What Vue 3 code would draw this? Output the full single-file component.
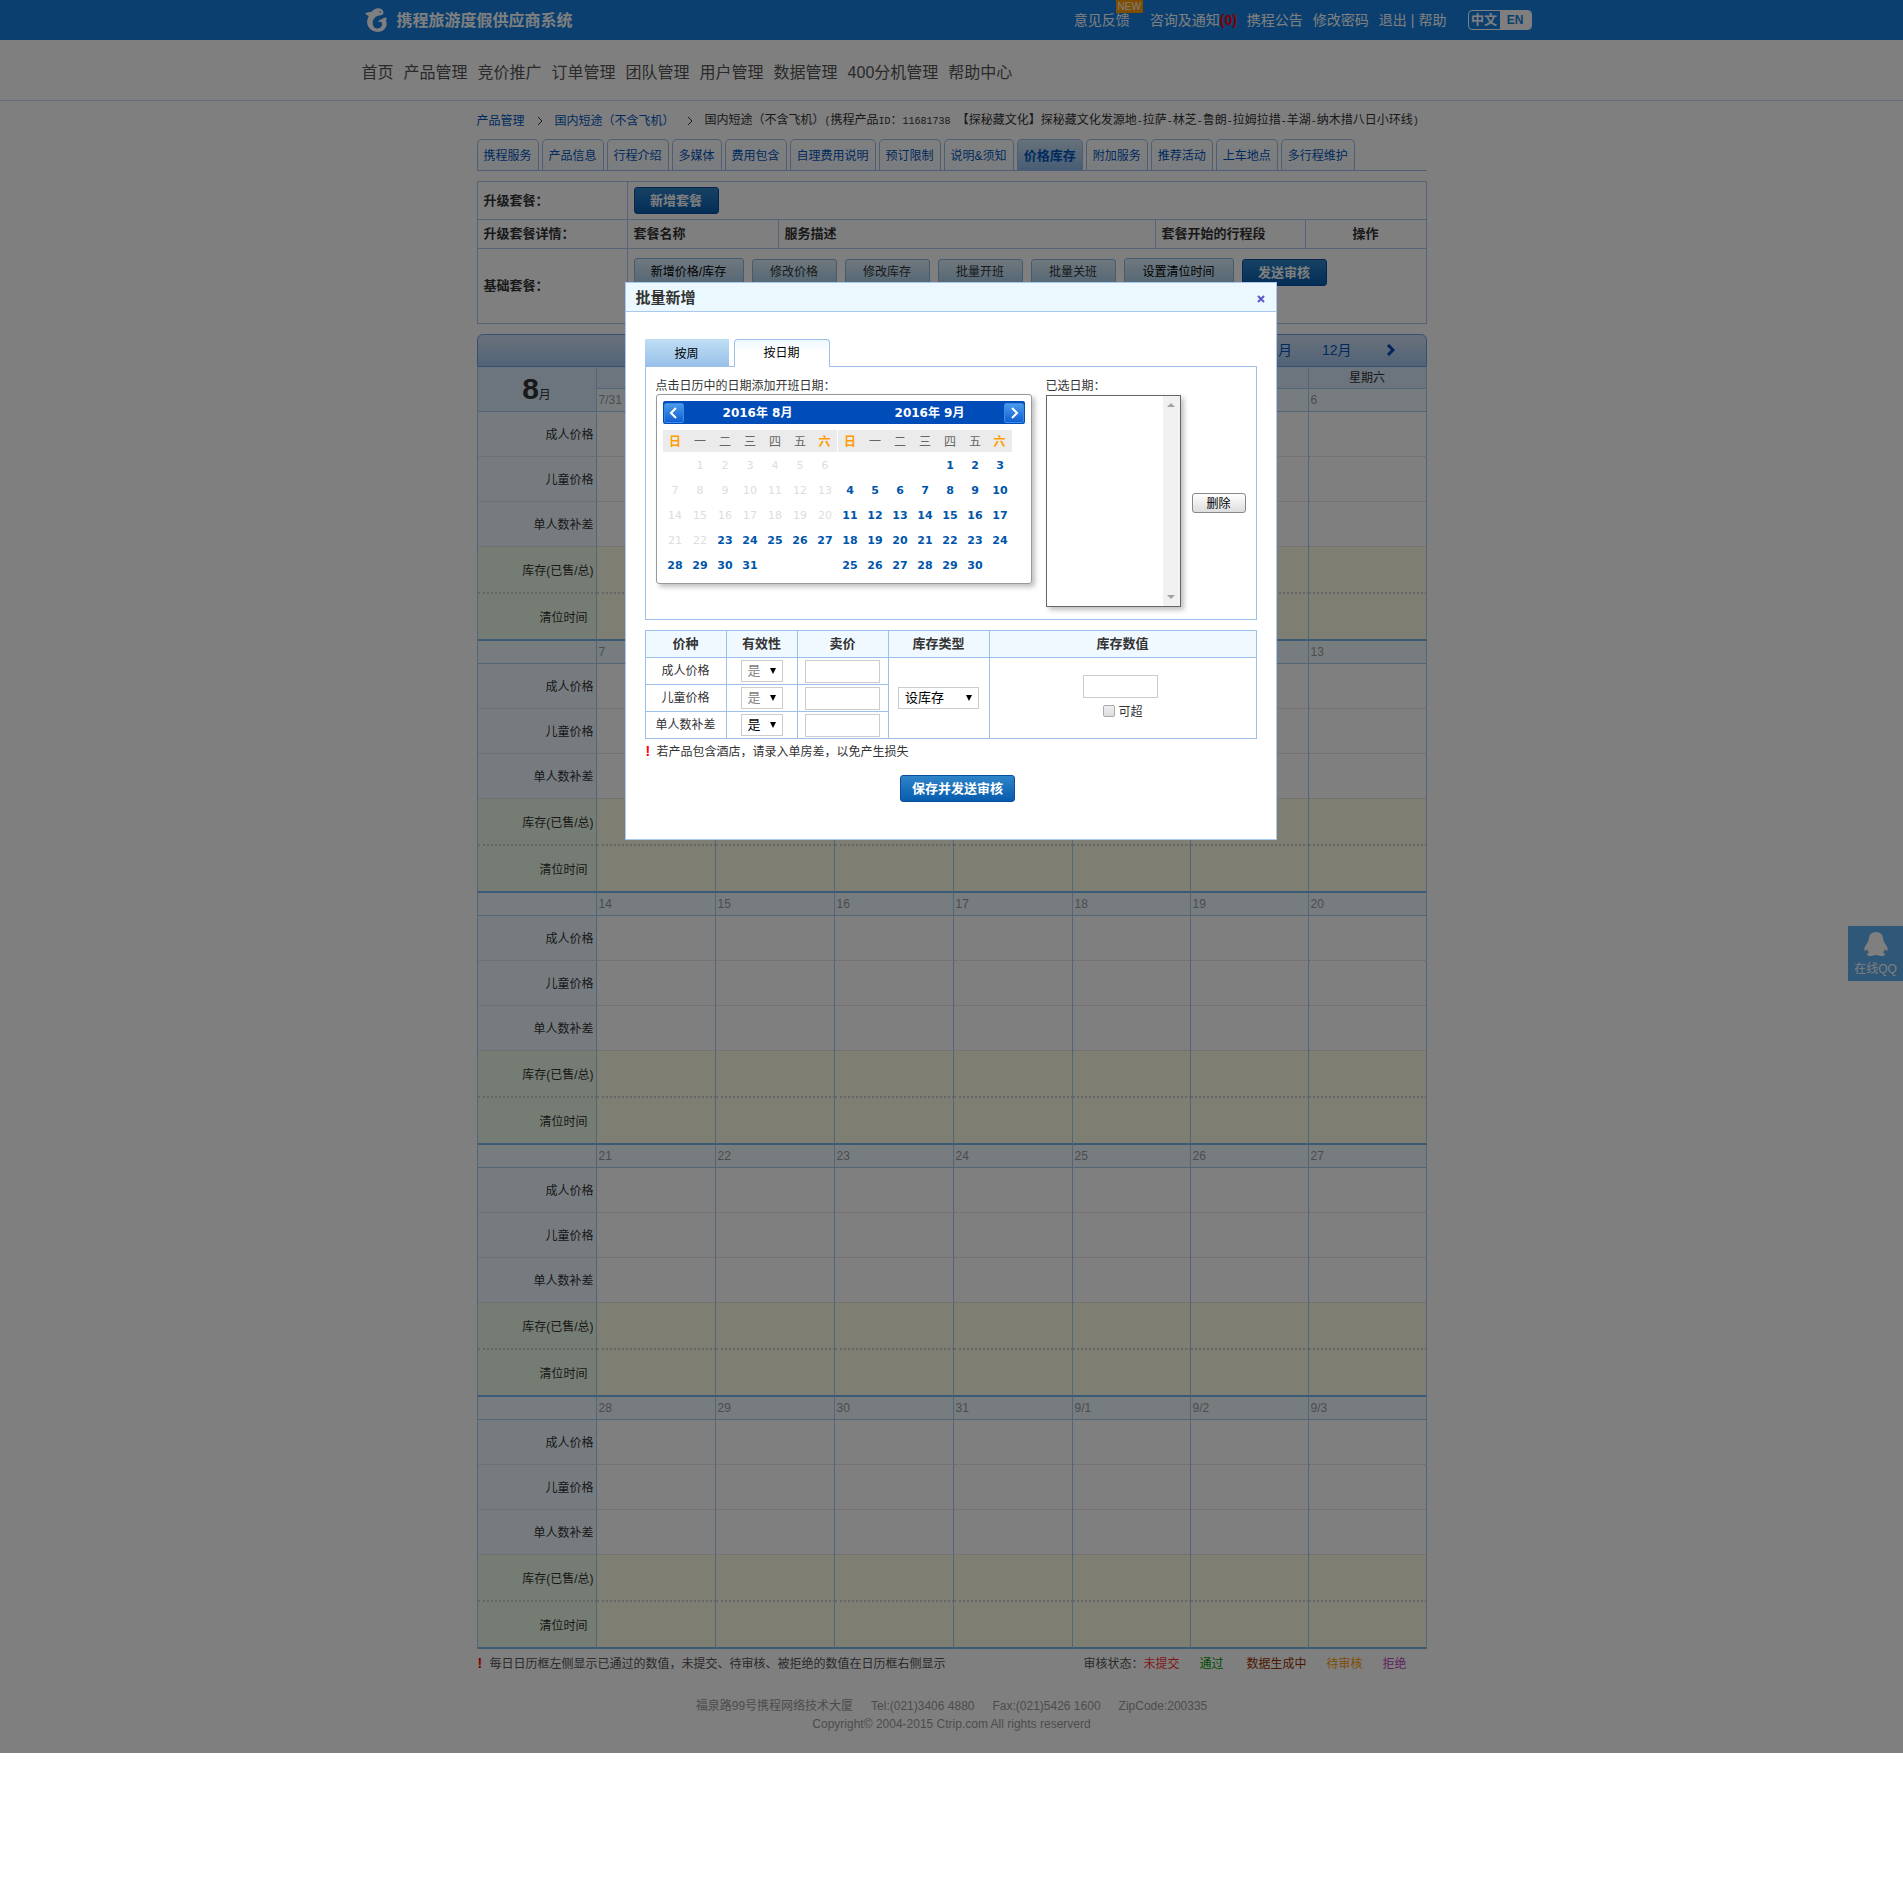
<script setup>
import { ref } from 'vue'

const nav = ['首页', '产品管理', '竞价推广', '订单管理', '团队管理', '用户管理', '数据管理', '400分机管理', '帮助中心']
const places = ['拉萨', '林芝', '鲁朗', '拉姆拉措', '羊湖', '纳木措八日小环线']
const tabs = ['携程服务', '产品信息', '行程介绍', '多媒体', '费用包含', '自理费用说明', '预订限制', '说明&须知', '价格库存', '附加服务', '推荐活动', '上车地点', '多行程维护']
const actions = [
  { label: '新增价格/库存', kind: 'wide' },
  { label: '修改价格', kind: 'soft' },
  { label: '修改库存', kind: 'soft' },
  { label: '批量开班', kind: 'soft' },
  { label: '批量关班', kind: 'soft' },
  { label: '设置清位时间', kind: 'wide' },
  { label: '发送审核', kind: 'primary' }
]
const months = ['11月', '12月']
const weekdays = ['日', '一', '二', '三', '四', '五', '六']
const weeks = [
  ['7/31', '1', '2', '3', '4', '5', '6'],
  ['7', '8', '9', '10', '11', '12', '13'],
  ['14', '15', '16', '17', '18', '19', '20'],
  ['21', '22', '23', '24', '25', '26', '27'],
  ['28', '29', '30', '31', '9/1', '9/2', '9/3']
]
const rows = [
  { label: '成人价格', cls: 'price' },
  { label: '儿童价格', cls: 'price' },
  { label: '单人数补差', cls: 'price' },
  { label: '库存(已售/总)', cls: 'stock' },
  { label: '清位时间', cls: 'stock clear' }
]

function buildMonth(title, offset, count, firstOpen) {
  const cells = Array(offset).fill(null)
  for (let d = 1; d <= count; d++) cells.push({ d, open: d >= firstOpen })
  while (cells.length < 35) cells.push(null)
  const lines = []
  for (let i = 0; i < 35; i += 7) lines.push(cells.slice(i, i + 7))
  return { title, lines }
}
const pickers = [buildMonth('2016年 8月', 1, 31, 23), buildMonth('2016年 9月', 4, 30, 1)]

const priceRows = [
  { label: '成人价格', locked: true },
  { label: '儿童价格', locked: true },
  { label: '单人数补差', locked: false }
]
const prices = ref(['', '', ''])
const stock = ref('')
const over = ref(false)
</script>

<template>
  <div class="page">
    <header class="top">
      <div class="wrap top-in">
        <a href="#" class="brand">
          <svg viewBox="0 0 24 24" width="24" height="24" aria-hidden="true">
            <path fill="#fff" d="M0 5.500C2 4.200 4.500 4.600 7 3.600C8.500 1.500 11 0 14 .3C16.500.6 18.500 2.400 18.500 4.600C18.500 6.300 17.300 7.200 15.500 7.300C12 7.600 9 9.500 8 12.600C7.200 15.600 8 18.800 10.500 20.200C13 21.200 16.300 19.800 17 17.200C17.300 15.800 17 14.600 16 13.700L13 14C13.700 12.300 15 11.300 17 11.200C18.300 10 20.300 9.600 22 10C21.300 10.900 21 11.800 21.100 13C22.300 16.200 21.400 19.800 18.700 22C15.400 24.700 9.600 24.300 5.500 21.200C1.800 18 1 12.800 3.800 8.600C3 7.300 1.200 6.700 0 5.500Z" />
            <circle cx="15" cy="4" r=".8" fill="#147fe1" />
          </svg>
          <span>携程旅游度假供应商系统</span>
        </a>
        <div class="links">
          <a href="#" class="feedback">意见反馈<span class="new">NEW</span></a>
          <a href="#" class="notice">咨询及通知<b>(0)</b></a>
          <a href="#">携程公告</a>
          <a href="#">修改密码</a>
          <span class="pair"><a href="#">退出</a><i>|</i><a href="#">帮助</a></span>
          <span class="lang"><a href="#" class="zh">中文</a><a href="#" class="en">EN</a></span>
        </div>
      </div>
    </header>
    <nav class="nav">
      <div class="wrap nav-in"><a v-for="n in nav" :key="n" href="#">{{ n }}</a></div>
    </nav>

    <main class="main">
      <div class="crumbs">
        <a href="#">产品管理</a>
        <svg viewBox="0 0 6 10" width="6" height="10"><path d="M1 1l4 4-4 4" fill="none" stroke="#333" /></svg>
        <a href="#">国内短途（不含飞机）</a>
        <svg viewBox="0 0 6 10" width="6" height="10"><path d="M1 1l4 4-4 4" fill="none" stroke="#333" /></svg>
        <span class="current">国内短途（不含飞机）<span class="mono">(</span>携程产品<span class="mono">ID</span>：<span class="mono">11681738&nbsp;</span>【探秘藏文化】探秘藏文化发源地<template v-for="p in places" :key="p"><span class="mono">-</span>{{ p }}</template><span class="mono">)</span></span>
      </div>

      <div class="tabs">
        <a v-for="t in tabs" :key="t" href="#" :class="{ on: t === '价格库存' }">{{ t }}</a>
      </div>

      <table class="info">
        <colgroup><col class="c1"><col class="c2"><col><col class="c1"><col class="c5"></colgroup>
        <tbody>
          <tr class="r1"><th>升级套餐：</th><td colspan="4"><button type="button" class="btn primary">新增套餐</button></td></tr>
          <tr class="r2"><th>升级套餐详情：</th><th>套餐名称</th><th>服务描述</th><th>套餐开始的行程段</th><th class="mid">操作</th></tr>
          <tr class="r3">
            <th>基础套餐：</th>
            <td colspan="4">
              <div class="actions"><button v-for="a in actions" :key="a.label" type="button" class="btn" :class="a.kind">{{ a.label }}</button></div>
            </td>
          </tr>
        </tbody>
      </table>

      <div class="months">
        <a v-for="m in months" :key="m" href="#">{{ m }}</a>
        <button type="button" aria-label="下一月"><svg viewBox="0 0 10 12" width="10" height="12"><path d="M2 1l5 5-5 5" fill="none" stroke="#0648b8" stroke-width="3" /></svg></button>
      </div>
      <table class="sched">
        <colgroup><col v-for="n in 5" :key="n" class="lab"><col><col><col></colgroup>
        <tbody>
          <tr class="days">
            <th rowspan="2" class="month"><b>8</b>月</th>
            <th v-for="w in weekdays" :key="w">星期{{ w }}</th>
          </tr>
          <template v-for="(week, i) in weeks" :key="i">
            <tr class="dates">
              <th v-if="i > 0"></th>
              <td v-for="d in week" :key="d">{{ d }}</td>
            </tr>
            <tr v-for="r in rows" :key="r.label" :class="r.cls"><th>{{ r.label }}</th><td v-for="d in week" :key="d"></td></tr>
          </template>
        </tbody>
      </table>

      <div class="notes">
        <p><b class="bang">!</b>每日日历框左侧显示已通过的数值，未提交、待审核、被拒绝的数值在日历框右侧显示</p>
        <div class="legend">
          <span>审核状态：<span class="s1">未提交</span></span><span class="s2">通过</span><span class="s3">数据生成中</span><span class="s4">待审核</span><span class="s5">拒绝</span>
        </div>
      </div>
    </main>

    <footer class="foot">
      <div class="foot-line"><span>福泉路99号携程网络技术大厦</span><span>Tel:(021)3406 4880</span><span>Fax:(021)5426 1600</span><span>ZipCode:200335</span></div>
      <div>Copyright© 2004-2015 Ctrip.com All rights reserverd</div>
    </footer>

    <a href="#" class="qq">
      <svg viewBox="0 0 24 24" width="24" height="24" aria-hidden="true"><path fill="#fff" d="M12 0C7.300 0 4.800 3.200 4.800 7.200C4.800 8.200 4.300 8.900 3.800 10C2.200 12.600 0 15.600.2 18C.4 19.400 1.800 18.600 3 16.900C3.300 18.400 4 19.600 5 20.600C2.700 21.400 2.300 23.200 4.500 23.700C7 24.200 10.500 23.700 12 22.800C13.500 23.700 17 24.200 19.500 23.700C21.700 23.200 21.300 21.400 19 20.600C20 19.600 20.700 18.400 21 16.900C22.200 18.600 23.600 19.400 23.800 18C24 15.600 21.800 12.600 20.200 10C19.700 8.900 19.200 8.200 19.200 7.200C19.200 3.200 16.700 0 12 0Z" /></svg>
      <span>在线QQ</span>
    </a>

    <div class="mask"></div>

    <section class="modal" role="dialog" aria-label="批量新增">
      <div class="modal-head">
        <h2>批量新增</h2>
        <button type="button" aria-label="关闭"><svg viewBox="0 0 8 8" width="8" height="8"><path d="M1 1l6 6M7 1l-6 6" stroke="#5a5ac8" stroke-width="2" /></svg></button>
      </div>
      <div class="modal-body">
        <div class="mtabs"><button type="button" class="week">按周</button><button type="button" class="date">按日期</button></div>
        <div class="panel">
          <div class="pick">
            <p>点击日历中的日期添加开班日期：</p>
            <div class="cal">
              <div class="cal-bar">
                <button type="button" aria-label="上一月"><svg viewBox="0 0 10 12" width="10" height="12"><path d="M7 1L2 6l5 5" fill="none" stroke="#fff" stroke-width="2" /></svg></button>
                <div class="titles"><span v-for="m in pickers" :key="m.title">{{ m.title }}</span></div>
                <button type="button" aria-label="下一月"><svg viewBox="0 0 10 12" width="10" height="12"><path d="M3 1l5 5-5 5" fill="none" stroke="#fff" stroke-width="2" /></svg></button>
              </div>
              <div class="cal-months">
                <table v-for="m in pickers" :key="m.title">
                  <thead><tr><th v-for="w in weekdays" :key="w" :class="{ end: w === '日' || w === '六' }">{{ w }}</th></tr></thead>
                  <tbody>
                    <tr v-for="(line, i) in m.lines" :key="i">
                      <td v-for="(c, j) in line" :key="j" :class="{ open: c && c.open }">{{ c ? c.d : '' }}</td>
                    </tr>
                  </tbody>
                </table>
              </div>
            </div>
          </div>
          <div class="chosen">
            <label for="chosen">已选日期：</label>
            <div class="list">
              <select id="chosen" multiple></select>
              <div class="bar"><i class="up"></i><i class="down"></i></div>
            </div>
          </div>
          <button type="button" class="del">删除</button>
        </div>

        <table class="form">
          <colgroup><col class="f1"><col class="f2"><col class="f3"><col class="f4"><col></colgroup>
          <thead><tr><th>价种</th><th>有效性</th><th>卖价</th><th>库存类型</th><th>库存数值</th></tr></thead>
          <tbody>
            <tr v-for="(r, i) in priceRows" :key="r.label">
              <td><label :for="'price' + i">{{ r.label }}</label></td>
              <td><span class="sel small"><select :disabled="r.locked" :aria-label="r.label + '有效性'"><option>是</option></select></span></td>
              <td><input :id="'price' + i" v-model="prices[i]" type="text" class="box"></td>
              <td v-if="i === 0" rowspan="3"><span class="sel"><select aria-label="库存类型"><option>设库存</option></select></span></td>
              <td v-if="i === 0" rowspan="3">
                <div class="stock-cell">
                  <input v-model="stock" type="text" class="box" aria-label="库存数值">
                  <label class="over"><input v-model="over" type="checkbox">可超</label>
                </div>
              </td>
            </tr>
          </tbody>
        </table>
        <p class="tip"><b class="bang">!</b>若产品包含酒店，请录入单房差，以免产生损失</p>
        <div class="submit"><button type="button" class="btn primary save">保存并发送审核</button></div>
      </div>
    </section>
  </div>
</template>

<style>
body { margin: 0; background: #fff; }
</style>

<style scoped>
* { box-sizing: border-box; }
.page { position: relative; font: 12px/18px "Liberation Sans", "Noto Sans CJK SC", sans-serif; color: #333; }
a { color: #0055bb; text-decoration: none; }
p, h2 { margin: 0; }
button, input, select { font-family: inherit; font-size: 12px; margin: 0; padding: 0; }
svg { display: block; }
i { font-style: normal; }
table { border-collapse: separate; border-spacing: 0; table-layout: fixed; width: 100%; }
th, td { padding: 0; }
.wrap { width: 1180px; max-width: 100%; margin: 0 auto; }

.top { height: 40px; background: #147fe1; }
.top-in { height: 40px; display: flex; justify-content: space-between; align-items: center; padding: 0 10px 0 3px; }
.brand { display: flex; align-items: center; gap: 8px; color: #fff; font-size: 16px; font-weight: bold; white-space: nowrap; }
.brand span { padding-top: 2px; }
.links { display: flex; align-items: center; gap: 10px; font-size: 14px; line-height: 20px; white-space: nowrap; }
.links a { color: #fff; }
.links i { color: #fff; margin: 0 4px; }
.feedback { position: relative; margin-right: 10px; }
.new { position: absolute; right: -13px; top: -10px; width: 27px; height: 13px; background: #ff9c00; font-size: 10px; line-height: 13px; text-align: center; }
.notice b { color: #f00; }
.lang { display: flex; width: 64px; height: 20px; margin-left: 11px; border: 1px solid #fff; border-radius: 4px; font-size: 13px; font-weight: bold; line-height: 18px; text-align: center; overflow: hidden; }
.lang a { flex: 1; }
.lang .en { background: #fff; color: #147fe1; font-size: 12px; }

.nav { border-bottom: 1px solid #cfe0f0; }
.nav-in { display: flex; gap: 10px; height: 60px; padding-top: 5px; align-items: center; font-size: 16px; line-height: 24px; }
.nav-in a { color: #555; white-space: nowrap; }

.main { width: 950px; max-width: 100%; margin: 0 auto; }
.crumbs { height: 38px; padding-top: 2px; display: flex; align-items: center; white-space: nowrap; }
.crumbs svg { margin: 0 12px; }
.current { color: #333; }
.mono { font: 10px/18px "Liberation Mono", monospace; }
.tabs { display: flex; gap: 3px; height: 32px; border-bottom: 1px solid #9dbfeb; margin-bottom: 10px; }
.tabs a { height: 31px; padding: 0 6px; border: 1px solid #9dbfeb; border-bottom: 0; border-radius: 5px 5px 0 0; line-height: 32px; white-space: nowrap; background: linear-gradient(#fff, #f3f9ff); }
.tabs a.on { font-size: 13px; font-weight: bold; line-height: 31px; background: linear-gradient(#cfe4f4, #8fbaea); }

.info { border-left: 1px solid #aac9ee; border-top: 1px solid #aac9ee; margin-bottom: 10px; font-size: 13px; }
.info th, .info td { border-right: 1px solid #aac9ee; border-bottom: 1px solid #aac9ee; padding: 0 6px; text-align: left; }
.info .mid { text-align: center; }
.c1 { width: 150px; }
.c2 { width: 151px; }
.c5 { width: 121px; }
.r1 { height: 38px; }
.r2 { height: 29px; }
.r3 { height: 75px; }
.r3 td { vertical-align: top; }
.actions { display: flex; gap: 8px; align-items: center; padding-top: 9px; }
.btn { display: block; width: 85px; height: 27px; border-radius: 3px; line-height: 25px; white-space: nowrap; text-align: center; }
.primary { border: 1px solid #0a4f9c; background: linear-gradient(#2e84c8, #085cae); color: #fff; font-size: 13px; font-weight: bold; }
.soft, .wide { border: 1px solid #8bb8dc; background: linear-gradient(#dff0fc, #a6cdea); color: #333; }
.wide { width: 110px; height: 29px; line-height: 27px; color: #000; }

.months { display: flex; justify-content: flex-end; align-items: center; gap: 30px; height: 33px; padding: 0 30px 2px 0; border: 1px solid #6a9fdc; border-radius: 6px 6px 0 0; background: linear-gradient(#d4e4f6, #a4c6ee); font-size: 14px; }
.months button { width: 10px; height: 12px; border: 0; background: none; margin-left: 4px; }
.sched { border-left: 1px solid #aacbf0; }
.lab { width: 119px; }
.sched th, .sched td { border-right: 1px solid #aacbf0; border-bottom: 1px solid #aacbf0; font-weight: normal; }
.sched .days { height: 22px; }
.sched .days th { background: #d8e8fa; }
.sched .month { font-size: 12px; }
.month b { font-size: 30px; line-height: 36px; }
.dates { height: 23px; background: #eefaff; }
.dates td { padding-left: 2px; color: #999; line-height: 20px; }
.price th, .stock th { text-align: right; padding: 2px 2px 0 0; }
.sched .price th, .sched .price td { border-bottom: 1px dotted #ccc; }
.price { height: 45px; }
.price th { background: #ecf7ff; }
.stock { height: 47px; background: #fffde6; }
.stock th { background: #ebf8e6; }
.sched .stock th, .sched .stock td { border-bottom: 2px dotted #ccc; }
.sched .clear th, .sched .clear td { border-bottom: 2px solid #76b5ea; }
.sched .clear th { padding-right: 8px; }

.notes { display: flex; justify-content: space-between; height: 28px; line-height: 28px; white-space: nowrap; }
.bang { display: inline-block; width: 13px; padding-left: 1px; color: #f00; font-size: 14px; }
.notes p { color: #555; }
.legend { display: flex; gap: 20px; padding-right: 20px; color: #555; line-height: 30px; }
.s1 { color: #f33; }
.s2 { color: #090; }
.s3 { color: #930; margin-left: 3px; }
.s4 { color: #f90; }
.s5 { color: #b4b; }
.foot { padding: 20px 0 20px; color: #999; text-align: center; }
.foot-line { display: flex; justify-content: center; gap: 18px; }
.qq { position: absolute; right: 0; top: 926px; width: 55px; height: 55px; padding-top: 6px; background: #5eaef0; color: #fff; display: flex; flex-direction: column; align-items: center; gap: 4px; }

.mask { position: absolute; inset: 0; background: rgba(0, 0, 0, .5); }
.modal { position: absolute; top: 282px; left: 50%; width: 652px; margin-left: -327px; border: 1px solid #a8c8f0; background: #fff; }
.modal-head { display: flex; justify-content: space-between; align-items: center; height: 29px; padding: 0 11px 0 10px; border-bottom: 1px solid #a8c8f0; background: #ebf8ff; }
.modal-head h2 { padding-top: 2px; font-size: 15px; line-height: 26px; }
.modal-head button { width: 8px; height: 8px; border: 0; background: none; margin-top: 4px; }
.modal-body { padding: 27px 19px 37px; }
.mtabs { display: flex; gap: 5px; height: 28px; position: relative; margin-bottom: -1px; }
.mtabs button { color: #000; line-height: 27px; border: 0; }
.mtabs .week { width: 84px; height: 27px; padding-top: 2px; background: linear-gradient(#c0def5, #98c1e9); }
.mtabs .date { width: 96px; height: 28px; border: 1px solid #9dbfeb; border-bottom: 0; border-radius: 4px 4px 0 0; background: linear-gradient(#eef8ff, #fff 12px); }
.panel { display: flex; height: 254px; padding: 10px; border: 1px solid #9dbfeb; margin-bottom: 10px; }
.pick p { height: 17px; }
.cal { width: 376px; height: 190px; padding: 6px; border: 1px solid #999; border-radius: 3px; box-shadow: 3px 3px 5px rgba(0, 0, 0, .25); }
.cal-bar { display: flex; align-items: center; justify-content: space-between; height: 23px; padding: 0 1px; background: #004cb8; border-radius: 2px; }
.cal-bar button { display: flex; align-items: center; justify-content: center; width: 20px; height: 20px; border: 1px solid #3c8ae8; border-radius: 2px; background: linear-gradient(#4a9ae8, #0f5fd4); }
.titles { display: flex; gap: 24px; flex: 1; color: #fff; font: bold 12px/22px "DejaVu Sans", "Noto Sans CJK SC", sans-serif; text-align: center; }
.titles span { flex: 1; }
.cal-months { display: flex; margin-top: 6px; }
.cal-months table { width: 175px; }
.cal-months thead tr { height: 23px; }
.cal-months th { padding-top: 2px; font-weight: normal; color: #666; border-bottom: 1px solid #fff; background: #ebebeb; }
.cal-months th:last-child { border-right: 1px solid #fff; }
.cal-months .end { color: #ff9c00; font-weight: bold; }
.cal-months tbody tr { height: 25px; }
.cal-months td { color: #ddd; text-align: center; font: 11px/18px "DejaVu Sans", sans-serif; }
.cal-months .open { color: #05a; font-weight: bold; }
.chosen { margin-left: 14px; }
.chosen label { display: block; line-height: 18px; }
.list { display: flex; width: 135px; height: 212px; border: 1px solid #666; box-shadow: 3px 3px 5px rgba(0, 0, 0, .25); }
.list select { flex: 1; min-width: 0; border: 0; outline: 0; background: #fff; }
.bar { display: flex; flex-direction: column; justify-content: space-between; align-items: center; width: 17px; padding: 7px 0; background: #f1f1f1; }
.up, .down { border: 4px solid transparent; border-top: 0; border-bottom-color: #a3a3a3; }
.down { border: 4px solid transparent; border-bottom: 0; border-top-color: #a3a3a3; }
.del { width: 54px; height: 20px; margin: 116px 0 0 11px; padding-top: 1px; border: 1px solid #888; border-radius: 3px; background: linear-gradient(#fff, #ddd); color: #000; line-height: 18px; }

.form { border-left: 1px solid #9dbfeb; border-top: 1px solid #9dbfeb; text-align: center; }
.form th, .form td { height: 27px; border-right: 1px solid #9dbfeb; border-bottom: 1px solid #9dbfeb; }
.form th { background: #f0f9ff; font-size: 13px; }
.f1 { width: 81px; }
.f2 { width: 71px; }
.f3 { width: 91px; }
.f4 { width: 101px; }
.sel { position: relative; display: block; width: 81px; height: 22px; margin: 0 auto; }
.sel::after { content: ""; position: absolute; right: 7px; top: 8px; border: 3px solid transparent; border-top: 6px solid #000; border-bottom: 0; }
.sel select { appearance: none; display: block; width: 100%; height: 22px; padding: 0 6px; border: 1px solid #ccc; border-radius: 0; background: #fff; color: #000; font-size: 13px; line-height: 20px; opacity: 1; }
.sel select:disabled { color: #808080; }
.small { width: 42px; }
.box { display: block; width: 75px; height: 23px; margin: 0 auto; border: 1px solid #ccc; background: #fff; }
.stock-cell { padding-right: 4px; }
.over { display: flex; align-items: center; justify-content: center; gap: 3px; padding: 5px 0 0 5px; }
.over input { appearance: none; width: 12px; height: 12px; border: 1px solid #aaa; border-radius: 2px; background: linear-gradient(#eee, #ddd); margin-top: -3px; }
.over input:checked { background: #147fe1; }
.tip { line-height: 24px; }
.tip .bang { width: 12px; }
.submit { display: flex; justify-content: center; padding: 11px 0 0 14px; }
.save { width: 115px; }
</style>
